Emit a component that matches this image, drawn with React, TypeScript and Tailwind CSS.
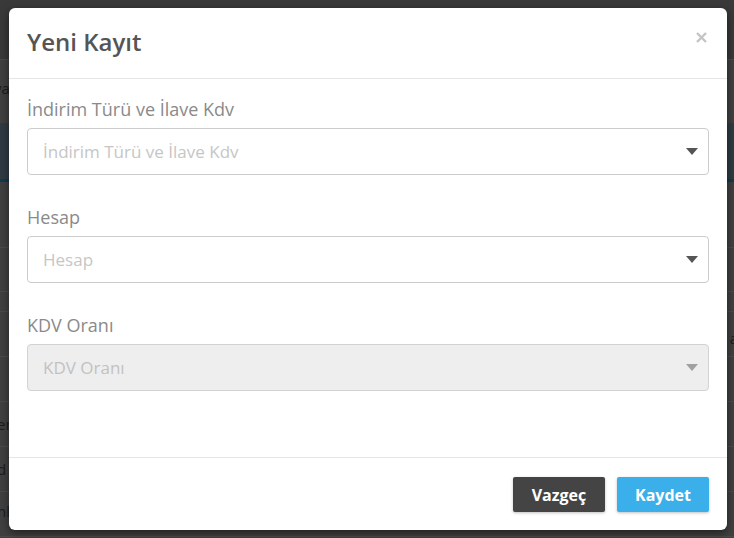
import React from "react";

const font = { fontFamily: '"Open Sans", "Noto Sans", sans-serif' };

function Caret({ color }: { color: string }) {
  return (
    <svg width="12" height="7" viewBox="0 0 12 7" className="shrink-0">
      <path d="M0 0 L12 0 L6 7 Z" fill={color} />
    </svg>
  );
}

function Field({
  label,
  placeholder,
  disabled,
}: {
  label: string;
  placeholder: string;
  disabled?: boolean;
}) {
  return (
    <div className="mb-[31px]">
      <div className="text-[18px] leading-[22px] text-[#8a8a8a] mb-[8px]">{label}</div>
      <div
        className={
          "h-[47px] border rounded-[4px] pl-[15px] pr-[10px] flex items-center justify-between " +
          (disabled ? "bg-[#eeeeee] border-[#d2d2d2]" : "bg-white border-[#cccccc]")
        }
      >
        <span className={"text-[17px] " + (disabled ? "text-[#c2c2c2]" : "text-[#c6c6c6]")}>
          {placeholder}
        </span>
        <Caret color={disabled ? "#a0a0a0" : "#555555"} />
      </div>
    </div>
  );
}

export default function App() {
  return (
    <div className="relative w-[734px] h-[538px] overflow-hidden bg-[#404040]" style={font}>
      {/* dimmed background page */}
      <div className="flex flex-col w-full">
        <div className="h-[60px] bg-[#393939] border-b border-[#4a4a4a]" />
        <div className="h-[63px] flex items-center text-[15px] text-[#1c1c1c]">
          <span className="-ml-[6px] -mt-[6px]">ya</span>
        </div>
        <div className="h-[59px] bg-[#2f3b42] border-b-[3px] border-[#123a52]" />
        <div className="h-[66px] border-b border-[#4b4b4b]" />
        <div className="h-[44px] border-b border-[#4b4b4b]" />
        <div className="h-[20px] border-b border-[#4b4b4b]" />
        <div className="h-[45px] border-b border-[#4b4b4b] flex items-center justify-end text-[15px] text-[#1c1c1c]">
          <span className="-mr-[4px] mt-[8px]">a</span>
        </div>
        <div className="h-[45px] border-b border-[#4b4b4b]" />
        <div className="h-[45px] border-b border-[#4b4b4b] flex items-center text-[15px] text-[#1c1c1c]">
          <span className="-ml-[3px]">er</span>
        </div>
        <div className="h-[45px] border-b border-[#4b4b4b] flex items-center text-[15px] text-[#1c1c1c]">
          <span className="-ml-[3px]">d</span>
        </div>
        <div className="h-[45px] border-b border-[#4b4b4b] flex items-center text-[15px] text-[#1c1c1c]">
          <span className="-ml-[3px] -mt-[6px]">nl</span>
        </div>
      </div>

      {/* modal */}
      <div className="absolute left-[9px] top-[8px] w-[718px] h-[522px] bg-white rounded-[6px] flex flex-col shadow-[0_3px_9px_rgba(0,0,0,0.5)]">
        <div className="h-[71px] border-b border-[#e5e5e5] px-[18px] flex items-center justify-between">
          <div className="text-[24px] font-semibold text-[#555555] leading-[30px] -mt-[2px]">Yeni Kayıt</div>
          <svg width="11" height="11" viewBox="0 0 11 11" className="mr-[2px] -mt-[12px]">
            <path d="M1 1 L10 10 M10 1 L1 10" stroke="#c4c4c4" strokeWidth="2.4" />
          </svg>
        </div>
        <div className="flex-1 pt-[19px] px-[18px]">
          <Field label="İndirim Türü ve İlave Kdv" placeholder="İndirim Türü ve İlave Kdv" />
          <Field label="Hesap" placeholder="Hesap" />
          <Field label="KDV Oranı" placeholder="KDV Oranı" disabled />
        </div>
        <div className="h-[73px] border-t border-[#e5e5e5] px-[18px] pt-[19px] flex justify-end gap-[12px]">
          <button className="w-[92px] h-[35px] bg-[#444444] text-white font-bold text-[16px] rounded-[2px] shadow-[0_1px_3px_rgba(0,0,0,0.25)]">
            Vazgeç
          </button>
          <button className="w-[92px] h-[35px] bg-[#3aafe9] text-white font-bold text-[16px] rounded-[2px] shadow-[0_1px_3px_rgba(0,0,0,0.25)]">
            Kaydet
          </button>
        </div>
      </div>
    </div>
  );
}
